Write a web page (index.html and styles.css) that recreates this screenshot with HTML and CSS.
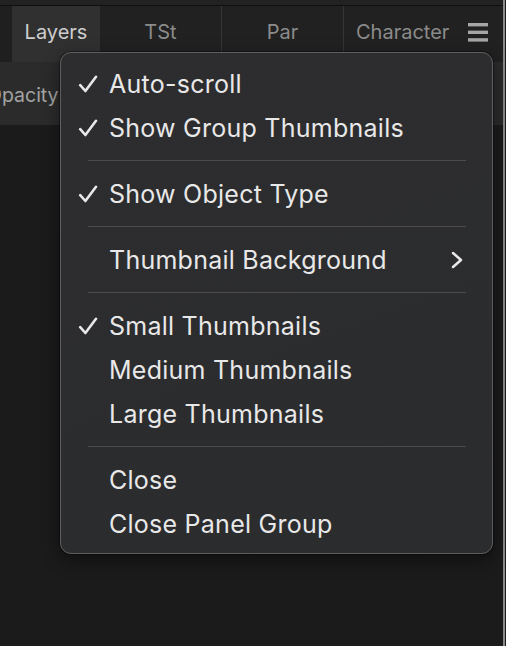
FILE: index.html
```html
<!DOCTYPE html>
<html>
<head>
<meta charset="utf-8">
<link rel="stylesheet" href="styles.css">
</head>
<body>
<div class="app">
  <div class="topstrip"></div>
  <div class="tabbar">
    <div class="tab-gap"></div>
    <div class="tab active">Layers</div>
    <div class="tab sep">TSt</div>
    <div class="tab sep">Par</div>
    <div class="tab last">
      <span class="tab-label">Character</span>
      <svg class="hamburger" width="20" height="19" viewBox="0 0 20 19">
        <rect x="0" y="0" width="20" height="3.4" fill="#a6a6a6"/>
        <rect x="0" y="7.6" width="20" height="3.4" fill="#a6a6a6"/>
        <rect x="0" y="15.2" width="20" height="3.4" fill="#a6a6a6"/>
      </svg>
    </div>
  </div>
  <div class="options">
    <span class="opacity">Opacity</span>
  </div>
  <div class="content"></div>
</div>

<div class="menu">
  <div class="item"><svg class="check" width="20" height="18" viewBox="0 0 20 18"><path d="M2.2 10.2 L7.4 16 L18 1.8" fill="none" stroke="#e8e8e8" stroke-width="2.6" stroke-linecap="round" stroke-linejoin="round"/></svg><span class="label">Auto-scroll</span></div>
  <div class="item"><svg class="check" width="20" height="18" viewBox="0 0 20 18"><path d="M2.2 10.2 L7.4 16 L18 1.8" fill="none" stroke="#e8e8e8" stroke-width="2.6" stroke-linecap="round" stroke-linejoin="round"/></svg><span class="label">Show Group Thumbnails</span></div>
  <div class="separator"></div>
  <div class="item"><svg class="check" width="20" height="18" viewBox="0 0 20 18"><path d="M2.2 10.2 L7.4 16 L18 1.8" fill="none" stroke="#e8e8e8" stroke-width="2.6" stroke-linecap="round" stroke-linejoin="round"/></svg><span class="label">Show Object Type</span></div>
  <div class="separator"></div>
  <div class="item"><span class="nocheck"></span><span class="label">Thumbnail Background</span><svg class="chevron" width="12" height="18" viewBox="0 0 12 18"><path d="M2 2 L10 9 L2 16" fill="none" stroke="#e8e8e8" stroke-width="2.5" stroke-linecap="round" stroke-linejoin="round"/></svg></div>
  <div class="separator"></div>
  <div class="item"><svg class="check" width="20" height="18" viewBox="0 0 20 18"><path d="M2.2 10.2 L7.4 16 L18 1.8" fill="none" stroke="#e8e8e8" stroke-width="2.6" stroke-linecap="round" stroke-linejoin="round"/></svg><span class="label">Small Thumbnails</span></div>
  <div class="item"><span class="nocheck"></span><span class="label">Medium Thumbnails</span></div>
  <div class="item"><span class="nocheck"></span><span class="label">Large Thumbnails</span></div>
  <div class="separator"></div>
  <div class="item"><span class="nocheck"></span><span class="label">Close</span></div>
  <div class="item"><span class="nocheck"></span><span class="label">Close Panel Group</span></div>
</div>
</body>
</html>
```
FILE: styles.css
```css
html, body {
  margin: 0;
  padding: 0;
}
body {
  width: 506px;
  height: 646px;
  overflow: hidden;
  background: #1a1a1a;
  font-family: "Inter", "Noto Sans", sans-serif;
  position: relative;
}
.app {
  width: 503px;
  height: 646px;
  border-right: 2px solid #8a8a8a;
  display: flex;
  flex-direction: column;
  background: #1b1b1b;
}
.topstrip {
  height: 5px;
  background: #222222;
  border-bottom: 1px solid #0f0f0f;
}
.tabbar {
  height: 56px;
  display: flex;
  background: #212121;
  font-size: 20px;
  color: #8b8b8b;
}
.tab-gap {
  width: 12px;
  background: #1f1f1f;
}
.tab {
  display: flex;
  align-items: center;
  justify-content: center;
  padding-bottom: 4px;
  box-sizing: border-box;
}
.tab.active {
  width: 88px;
  background: #303030;
  color: #cdcdcd;
  padding-bottom: 4px;
}
.tab.sep {
  width: 122px;
  border-right: 1px solid #353535;
}
.tab.last {
  flex: 1;
  justify-content: flex-start;
  padding-left: 12px;
}
.tab-label {
  flex: 1;
}
.hamburger {
  margin-right: 15px;
  margin-top: 1px;
}
.options {
  height: 63px;
  background: #2b2b2b;
  display: flex;
  align-items: center;
  overflow: hidden;
}
.opacity {
  margin-left: -13px;
  font-size: 19.5px;
  color: #a3a3a3;
  padding-top: 3px;
}
.content {
  flex: 1;
  background: #1b1b1b;
}
.menu {
  position: absolute;
  left: 60px;
  top: 52px;
  width: 433px;
  box-sizing: border-box;
  border: 1px solid #5e5e60;
  border-radius: 11px;
  background: linear-gradient(160deg, #2d2d2f 0%, #2b2c2e 100%);
  box-shadow: 0 6px 18px rgba(0, 0, 0, 0.45), 0 0 0 1px rgba(0, 0, 0, 0.35);
  padding: 9px 0 7px 0;
  color: #e8e8e8;
  font-size: 25px;
  letter-spacing: 0.25px;
}
.item {
  height: 44px;
  display: flex;
  align-items: center;
  padding: 0 29px 0 17px;
}
.check, .nocheck {
  width: 20px;
  height: 18px;
  flex: none;
  margin-right: 11px;
  display: block;
}
.label {
  flex: 1;
  white-space: nowrap;
}
.chevron {
  flex: none;
  display: block;
}
.separator {
  height: 1px;
  background: #4b4b4d;
  margin: 10px 26px 11px 27px;
}
```
